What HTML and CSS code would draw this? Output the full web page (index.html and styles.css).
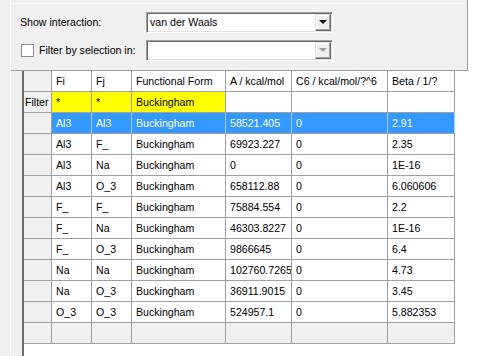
FILE: index.html
```html
<!DOCTYPE html>
<html>
<head>
<meta charset="utf-8">
<link rel="stylesheet" href="styles.css">
</head>
<body>
<div class="root">
  <div class="strip"></div>
  <div class="main">
    <div class="toprow">
      <div class="panel">
        <div class="line">
          <span class="label">Show interaction:</span>
          <div class="combo">
            <span class="combo-text">van der Waals</span>
            <span class="combo-btn"><span class="arrow"></span></span>
          </div>
        </div>
        <div class="line">
          <span class="label chk-label"><span class="checkbox"></span>Filter by selection in:</span>
          <div class="combo">
            <span class="combo-text"></span>
            <span class="combo-btn"><span class="arrow disabled"></span></span>
          </div>
        </div>
      </div>
      <div class="panel-right"></div>
    </div>
    <div class="gridrow">
      <div class="gutter"></div>
      <div class="gridarea">
        <div class="grid">
          <div class="c rh"></div><div class="c hd">Fi</div><div class="c hd">Fj</div><div class="c hd">Functional Form</div><div class="c hd">A / kcal/mol</div><div class="c hd">C6 / kcal/mol/?^6</div><div class="c hd">Beta / 1/?</div>
          <div class="c rh">Filter</div><div class="c yel">*</div><div class="c yel">*</div><div class="c yel">Buckingham</div><div class="c"></div><div class="c"></div><div class="c"></div>
          <div class="c rh"></div><div class="c sel">Al3</div><div class="c sel">Al3</div><div class="c sel">Buckingham</div><div class="c sel">58521.405</div><div class="c sel">0</div><div class="c sel">2.91</div>
          <div class="c rh"></div><div class="c">Al3</div><div class="c">F_</div><div class="c">Buckingham</div><div class="c">69923.227</div><div class="c">0</div><div class="c">2.35</div>
          <div class="c rh"></div><div class="c">Al3</div><div class="c">Na</div><div class="c">Buckingham</div><div class="c">0</div><div class="c">0</div><div class="c">1E-16</div>
          <div class="c rh"></div><div class="c">Al3</div><div class="c">O_3</div><div class="c">Buckingham</div><div class="c">658112.88</div><div class="c">0</div><div class="c">6.060606</div>
          <div class="c rh"></div><div class="c">F_</div><div class="c">F_</div><div class="c">Buckingham</div><div class="c">75884.554</div><div class="c">0</div><div class="c">2.2</div>
          <div class="c rh"></div><div class="c">F_</div><div class="c">Na</div><div class="c">Buckingham</div><div class="c">46303.8227</div><div class="c">0</div><div class="c">1E-16</div>
          <div class="c rh"></div><div class="c">F_</div><div class="c">O_3</div><div class="c">Buckingham</div><div class="c">9866645</div><div class="c">0</div><div class="c">6.4</div>
          <div class="c rh"></div><div class="c">Na</div><div class="c">Na</div><div class="c">Buckingham</div><div class="c">102760.7265</div><div class="c">0</div><div class="c">4.73</div>
          <div class="c rh"></div><div class="c">Na</div><div class="c">O_3</div><div class="c">Buckingham</div><div class="c">36911.9015</div><div class="c">0</div><div class="c">3.45</div>
          <div class="c rh"></div><div class="c">O_3</div><div class="c">O_3</div><div class="c">Buckingham</div><div class="c">524957.1</div><div class="c">0</div><div class="c">5.882353</div>
          <div class="c rh"></div><div class="c new"></div><div class="c new"></div><div class="c new"></div><div class="c new"></div><div class="c new"></div><div class="c new"></div>
        </div>
      </div>
    </div>
  </div>
</div>
</body>
</html>
```
FILE: styles.css
```css
* { box-sizing: border-box; }
html, body { margin: 0; padding: 0; }
body {
  width: 492px;
  height: 356px;
  overflow: hidden;
  background: #f0f0f0;
  font-family: "Liberation Sans", Arial, sans-serif;
  font-size: 10.6px;
  color: #000;
}
.root { display: flex; height: 356px; }
.strip { width: 11px; flex: none; border-right: 1px solid #fcfcfc; background: #f0f0f0; }
.main { flex: 1; display: flex; flex-direction: column; min-width: 0; }
.toprow { display: flex; height: 71px; flex: none; }
.panel {
  width: 457px;
  padding-top: 3px;
  border-right: 1px solid #a0a0a0;
  border-bottom: 1px solid #a0a0a0;
  background: #f0f0f0;
  display: flex;
  flex-direction: column;
}
.panel::before {
  content: "";
  display: block;
  height: 1px;
  background: #fafafa;
  margin-right: 2px;
}
.panel-right { flex: 1; background: #fff; }
.line { display: flex; align-items: center; height: 20px; margin-top: 8px; padding-left: 9px; }
.label { width: 126px; flex: none; white-space: nowrap; }
.chk-label { display: flex; align-items: center; }
.checkbox {
  width: 13px; height: 13px;
  margin-left: 1px; margin-right: 5px;
  background: #fff;
  border: 1px solid #8e8f8f;
  flex: none;
}
.combo {
  width: 187px; height: 21px;
  background: #fff;
  border-top: 1px solid #a0a0a0;
  border-left: 1px solid #a0a0a0;
  border-right: 1px solid #fff;
  border-bottom: 1px solid #fff;
  box-shadow: inset 1px 1px 0 #696969, inset -1px -1px 0 #e3e3e3;
  display: flex;
  align-items: center;
  padding: 2px 1px 2px 3px;
}
.combo-text { flex: 1; }
.combo-btn {
  width: 16px; height: 17px;
  background: #f0f0f0;
  border-top: 1px solid #e3e3e3;
  border-left: 1px solid #e3e3e3;
  border-right: 1px solid #696969;
  border-bottom: 1px solid #696969;
  box-shadow: inset -1px -1px 0 #a0a0a0, inset 1px 1px 0 #fff;
  display: flex; align-items: center; justify-content: center;
}
.arrow {
  width: 0; height: 0;
  border-left: 4px solid transparent;
  border-right: 4px solid transparent;
  border-top: 4px solid #000;
}
.arrow.disabled { border-top-color: #a0a0a0; }
.gridrow { flex: 1; display: flex; }
.gutter { width: 11px; flex: none; background: #f0f0f0; }
.gridarea {
  flex: 1;
  background: #fff;
  border-left: 2px solid #6d6d6d;
}
.grid {
  display: grid;
  grid-template-columns: 28px 40px 40px 94px 66px 96px 67px;
  grid-auto-rows: 21px;
  width: 431px;
}
.c {
  border-right: 1px solid #a0a0a0;
  border-bottom: 1px solid #a0a0a0;
  padding: 0 0 0 4px;
  white-space: nowrap;
  overflow: hidden;
  display: flex;
  align-items: center;
  background: #fff;
}
.rh { background: #f0f0f0; padding-left: 1px; }
.hd { background: #fff; }
.yel { background: #ffff00; }
.sel { background: #3399ff; color: #fff; border-right-color: #a5cff7; }
.new { background: #f0f0f0; }
```
